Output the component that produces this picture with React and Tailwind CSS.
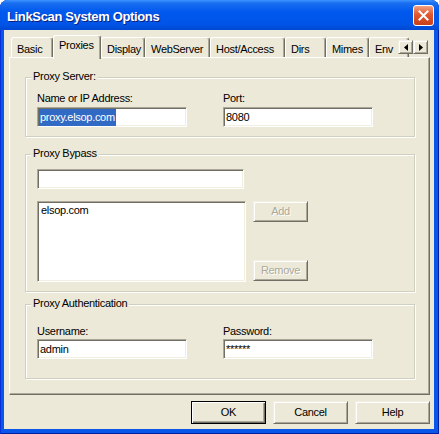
import React from 'react';

const sunken =
  'border border-[#ACA899] border-r-white border-b-white shadow-[inset_1px_1px_0_#716F64,inset_-1px_-1px_0_#F1EFE2] bg-white';
const raised =
  'border border-[#F1EFE2] border-r-[#716F64] border-b-[#716F64] shadow-[inset_1px_1px_0_#fff,inset_-1px_-1px_0_#ACA899] bg-[#ECE9D8]';

const tabs = [
  { label: 'Basic', w: 'w-[42px]' },
  { label: 'Proxies', w: 'w-[48px]', active: true },
  { label: 'Display', w: 'w-[44px]' },
  { label: 'WebServer', w: 'w-[65px]' },
  { label: 'Host/Access', w: 'w-[75px]' },
  { label: 'Dirs', w: 'w-[41px]' },
  { label: 'Mimes', w: 'w-[43px]' },
  { label: 'Env', w: 'w-[40px]' },
];

function Group({ title, className, children }) {
  return (
    <div className={`relative border border-[#D0D0BF] shadow-[inset_1px_1px_0_#fff,1px_1px_0_#fff] ${className}`}>
      <span className="absolute -top-[8px] left-[5px] bg-[#ECE9D8] px-[2px] leading-[13px]">{title}</span>
      {children}
    </div>
  );
}

function Field({ value, w = 'w-[150px]', selected }) {
  return (
    <div className={`${sunken} ${w} flex h-[20px] items-center pl-[1px]`}>
      {selected ? (
        <span className="flex h-[17px] items-center bg-[#316AC5] px-[1px] text-white">{value}</span>
      ) : (
        <span className="pl-[1px]">{value}</span>
      )}
    </div>
  );
}

function Button({ children, disabled, isDefault, w = 'w-[75px]', h = 'h-[23px]' }) {
  const frame = isDefault
    ? 'border border-black bg-[#ECE9D8] shadow-[inset_1px_1px_0_#fff,inset_-1px_-1px_0_#716F64,inset_-2px_-2px_0_#ACA899]'
    : raised;
  return (
    <div className={`${frame} ${w} ${h} flex items-center justify-center`}>
      <span className={disabled ? 'text-[#ACA899] [text-shadow:1px_1px_0_#fff]' : ''}>{children}</span>
    </div>
  );
}

export default function App() {
  return (
    <div className="h-[434px] w-[439px] overflow-hidden rounded-t-[8px] bg-[#0A56E8] font-[family-name:'Liberation_Sans',Arial,sans-serif] text-[11px] leading-[13px] tracking-[-0.3px] text-black shadow-[inset_1px_0_0_#0831D9,inset_-1px_0_0_#001EA0,inset_0_-1px_0_#001EA0]">
      {/* title bar */}
      <div className="flex h-[30px] items-center justify-between bg-[linear-gradient(to_bottom,#3D95FF_0%,#1A6FF0_10%,#0058EE_40%,#0055E8_80%,#0048D0_100%)] pl-[7px] pr-[5px]">
        <span className="mt-[3px] text-[13px] font-bold leading-[16px] tracking-[-0.35px] text-white [text-shadow:1px_1px_0_#0A1E7A]">
          LinkScan System Options
        </span>
        <div className="flex h-[21px] w-[21px] items-center justify-center rounded-[3px] border border-white bg-[linear-gradient(to_bottom,#F2A182,#E0582F_45%,#C8401A)]">
          <svg width="11" height="11" viewBox="0 0 11 11">
            <path d="M1.5 1.5 L9.5 9.5 M9.5 1.5 L1.5 9.5" stroke="#fff" strokeWidth="2" strokeLinecap="square" />
          </svg>
        </div>
      </div>

      {/* body */}
      <div className="ml-[4px] mr-[5px] flex h-[399px] flex-col bg-[#ECE9D8]">
        {/* tab strip */}
        <div className="relative z-10 flex h-[27px] items-end pl-[7px]">
          {tabs.map((t) =>
            t.active ? (
              <div
                key={t.label}
                className={`${t.w} -mb-[2px] h-[24px] shrink-0 rounded-t-[3px] border-l border-t border-r border-white border-r-[#716F64] bg-[#ECE9D8] pl-[5px] pt-[3px] shadow-[inset_-1px_0_0_#ACA899]`}
              >
                {t.label}
              </div>
            ) : (
              <div
                key={t.label}
                className={`${t.w} h-[20px] shrink-0 rounded-t-[3px] border-l border-t border-r border-white border-r-[#716F64] pl-[5px] pt-[5px] shadow-[inset_-1px_0_0_#ACA899]`}
              >
                {t.label}
              </div>
            ),
          )}
          <div className="absolute left-[394px] top-[10px] flex">
            <div className={`${raised} flex h-[14px] w-[15px] items-center justify-center`}>
              <svg width="4" height="7" viewBox="0 0 4 7">
                <path d="M4 0 L0 3.5 L4 7 Z" fill="#000" />
              </svg>
            </div>
            <div className={`${raised} flex h-[14px] w-[15px] items-center justify-center`}>
              <svg width="4" height="7" viewBox="0 0 4 7">
                <path d="M0 0 L4 3.5 L0 7 Z" fill="#000" />
              </svg>
            </div>
          </div>
        </div>

        {/* tab panel */}
        <div className="ml-[5px] mr-[4px] h-[338px] border border-white border-r-[#716F64] border-b-[#716F64] pl-[15px] pt-[19px] shadow-[inset_-1px_-1px_0_#ACA899]">
          <Group title="Proxy Server:" className="h-[60px] w-[390px] pl-[11px] pt-[14px]">
            <div className="flex gap-[36px]">
              <div className="flex flex-col gap-[2px]">
                <span>Name or IP Address:</span>
                <Field value="proxy.elsop.com" selected />
              </div>
              <div className="flex flex-col gap-[2px]">
                <span>Port:</span>
                <Field value="8080" />
              </div>
            </div>
          </Group>

          <Group title="Proxy Bypass" className="mt-[17px] h-[138px] w-[390px] pl-[11px] pt-[14px]">
            <Field value="" w="w-[207px]" />
            <div className="mt-[12px] flex gap-[7px]">
              <div className={`${sunken} h-[81px] w-[209px] pl-[3px] pt-[2px]`}>elsop.com</div>
              <div className="flex h-[81px] flex-col justify-between pb-[1px]">
                <Button disabled w="w-[55px]" h="h-[21px]">Add</Button>
                <Button disabled w="w-[55px]" h="h-[21px]">Remove</Button>
              </div>
            </div>
          </Group>

          <Group title="Proxy Authentication" className="mt-[12px] h-[75px] w-[390px] pl-[11px] pt-[20px]">
            <div className="flex gap-[36px]">
              <div className="flex flex-col gap-[1px]">
                <span>Username:</span>
                <Field value="admin" />
              </div>
              <div className="flex flex-col gap-[1px]">
                <span>Password:</span>
                <Field value="******" />
              </div>
            </div>
          </Group>
        </div>

        {/* dialog buttons */}
        <div className="mr-[4px] mt-[6px] flex justify-end gap-[7px]">
          <Button isDefault>OK</Button>
          <Button>Cancel</Button>
          <Button>Help</Button>
        </div>
      </div>
    </div>
  );
}
